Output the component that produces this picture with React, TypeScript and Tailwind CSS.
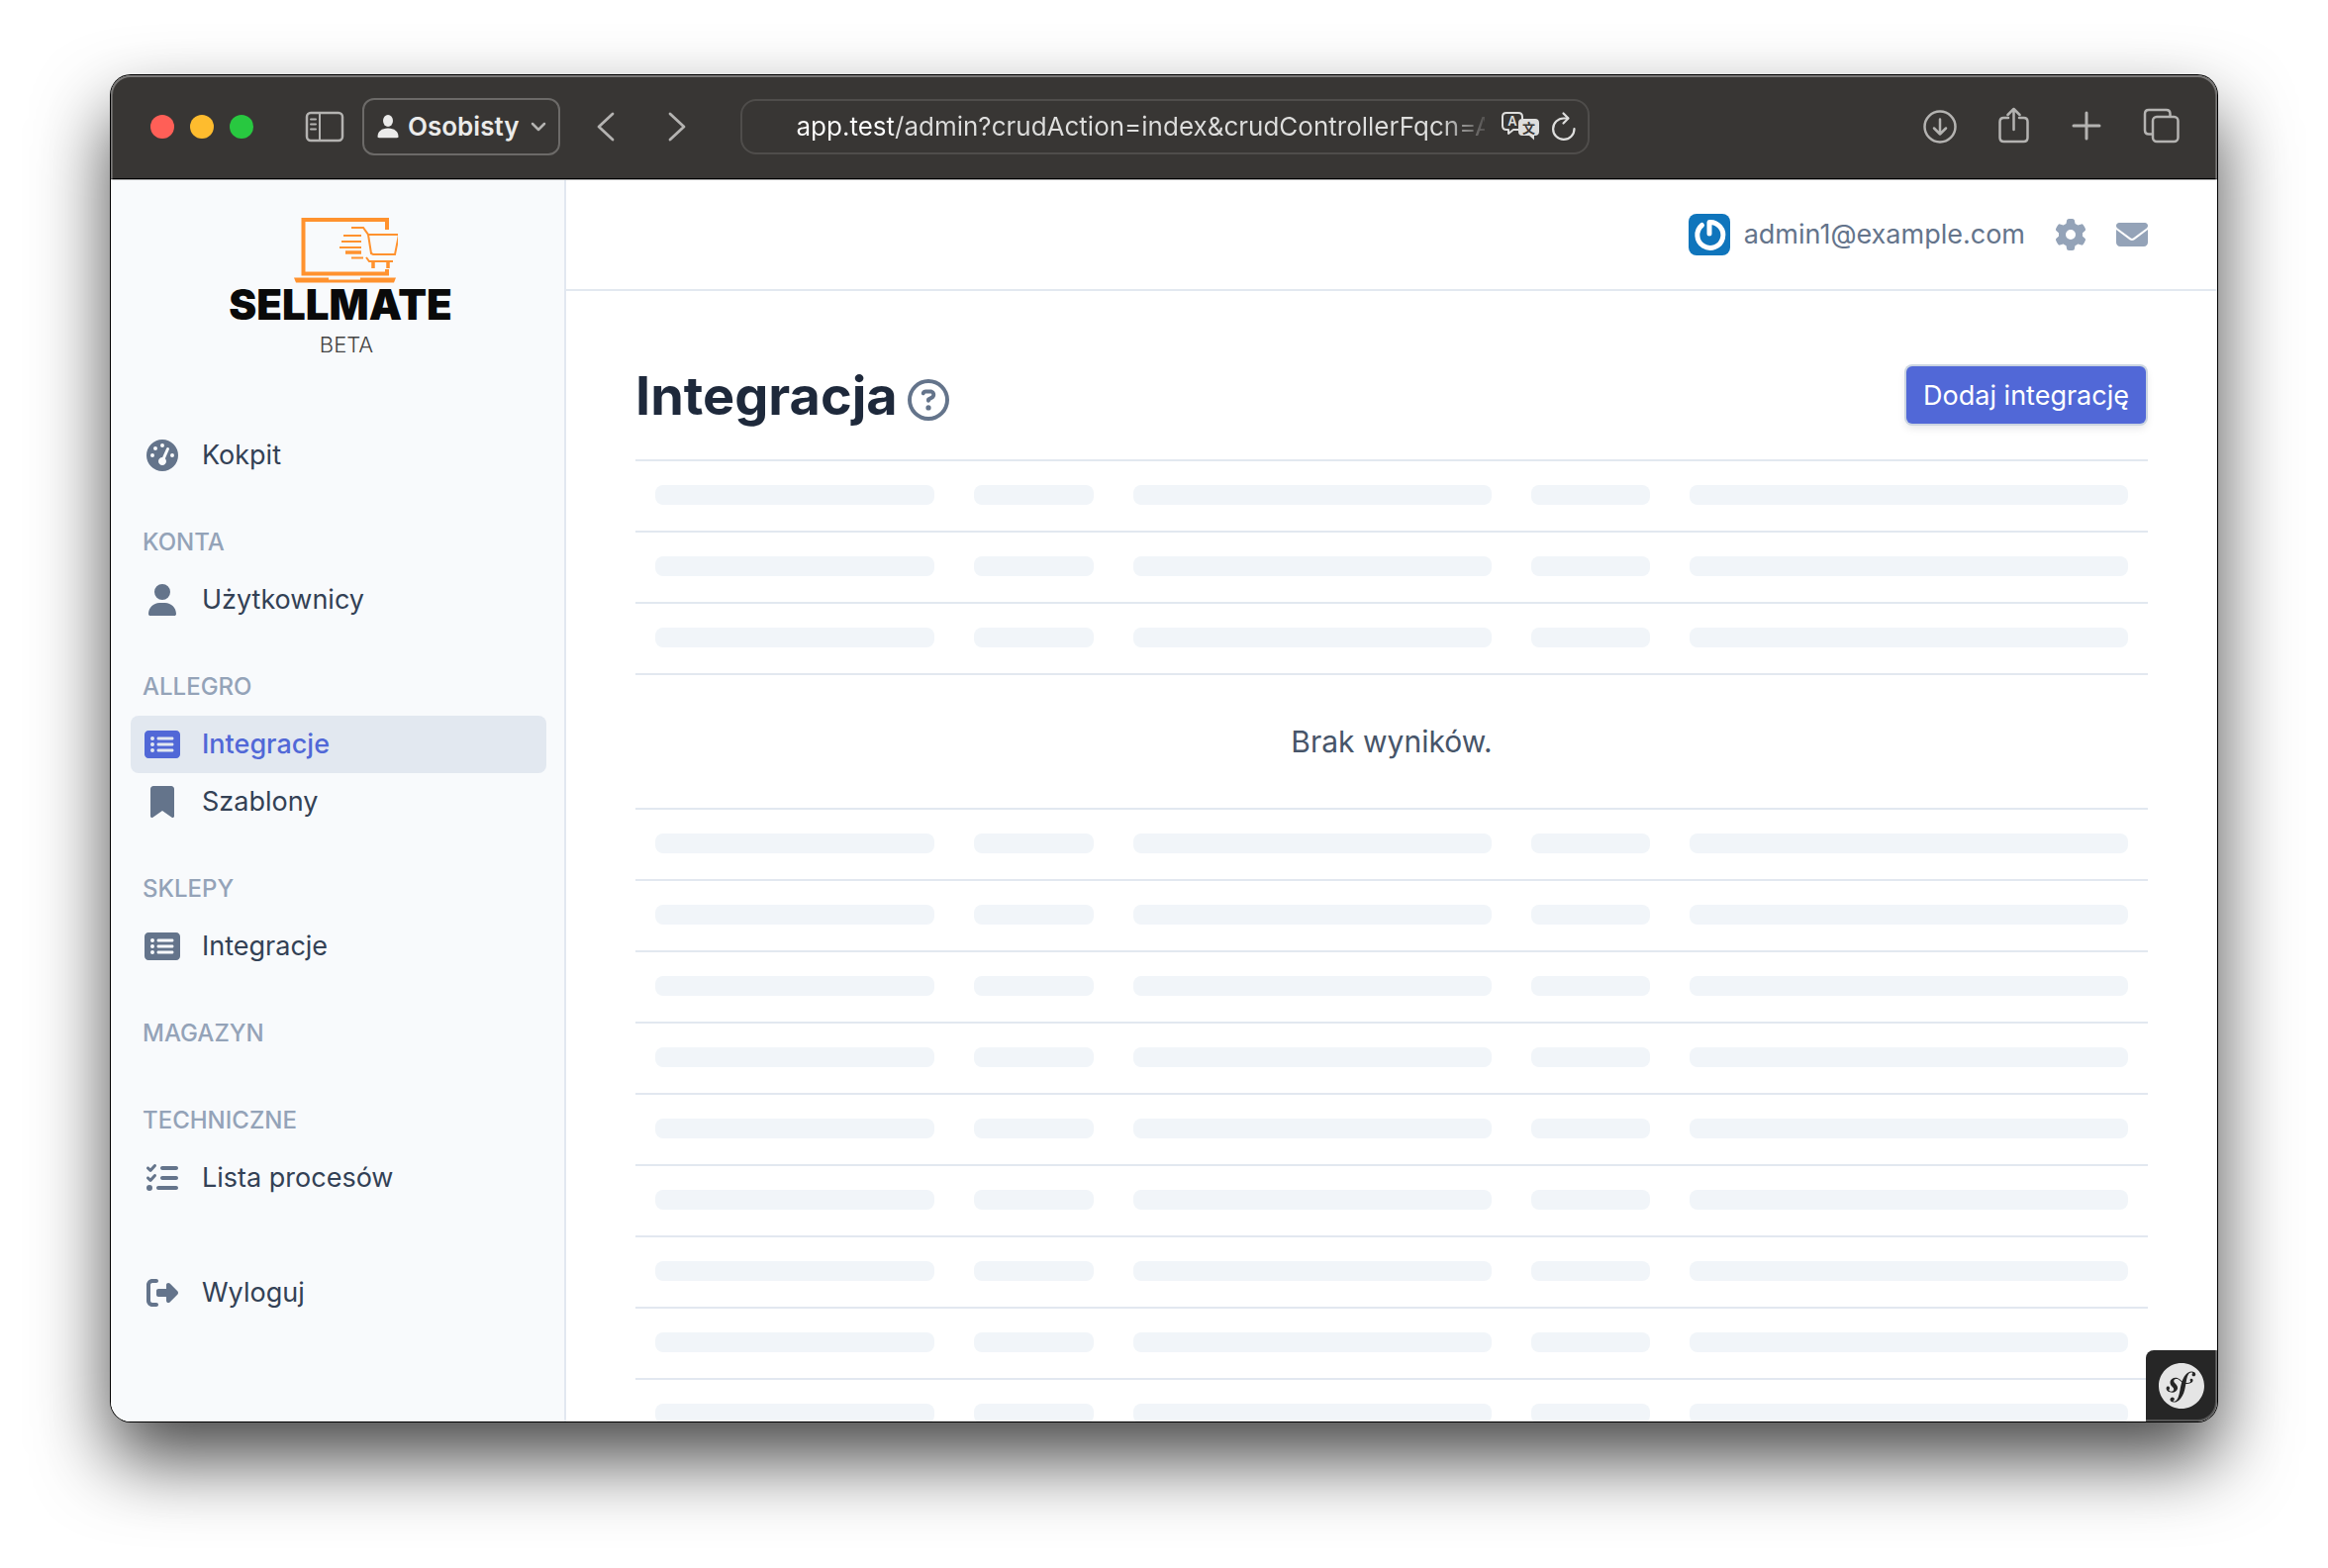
import type { ComponentType } from "react";
import {
  FaBookmark,
  FaEnvelope,
  FaGaugeHigh,
  FaGear,
  FaListCheck,
  FaRectangleList,
  FaRegCircleQuestion,
  FaRightFromBracket,
  FaUser,
} from "react-icons/fa6";
import { SiSymfony } from "react-icons/si";

type Icon = ComponentType<{ className?: string }>;

type MenuSection = {
  title?: string;
  items: { label: string; icon: Icon; active?: boolean }[];
};

const menu: MenuSection[] = [
  { items: [{ label: "Kokpit", icon: FaGaugeHigh }] },
  { title: "Konta", items: [{ label: "Użytkownicy", icon: FaUser }] },
  {
    title: "Allegro",
    items: [
      { label: "Integracje", icon: FaRectangleList, active: true },
      { label: "Szablony", icon: FaBookmark },
    ],
  },
  { title: "Sklepy", items: [{ label: "Integracje", icon: FaRectangleList }] },
  { title: "Magazyn", items: [] },
  { title: "Techniczne", items: [{ label: "Lista procesów", icon: FaListCheck }] },
];

function TitleBar() {
  return (
    <div className="flex h-[105px] shrink-0 items-center border-b border-black bg-[#383634] pr-9 pb-px pl-10 text-[#b4b3b1]">
      <div className="flex gap-4">
        <span className="h-6 w-6 rounded-full bg-[#ff5f57]" />
        <span className="h-6 w-6 rounded-full bg-[#febc2e]" />
        <span className="h-6 w-6 rounded-full bg-[#28c840]" />
      </div>

      <button type="button" aria-label="Pasek boczny" className="ml-[52px]">
        <svg className="h-8 w-10" viewBox="0 0 40 32" fill="none" stroke="currentColor" strokeWidth="2.5">
          <rect x="2" y="2" width="36" height="28" rx="4" />
          <path d="M15 2v28" strokeWidth="2" />
          <path d="M6 8.500h5M6 13.500h5M6 18.500h5" strokeWidth="2" strokeLinecap="round" />
        </svg>
      </button>

      <button
        type="button"
        className="ml-[18px] flex h-[58px] items-center rounded-xl border-2 border-[#6c6a68] px-3 text-[#ebebea]"
      >
        <svg className="h-6 w-6" viewBox="0 0 24 24" fill="currentColor">
          <ellipse cx="12" cy="6" rx="5" ry="6" />
          <path d="M1.500 22c0-5 4-8.500 10.500-8.500s10.500 3.500 10.500 8.500c0 .8-.5 1.200-1.500 1.200H3c-1 0-1.500-.4-1.500-1.200z" />
        </svg>
        <span className="ml-2 text-[26px] font-semibold">Osobisty</span>
        <svg className="ml-3 h-4 w-4 text-[#b4b3b1]" viewBox="0 0 16 16" fill="none" stroke="currentColor" strokeWidth="2.500" strokeLinecap="round" strokeLinejoin="round">
          <path d="M2 5l6 6 6-6" />
        </svg>
      </button>

      <button type="button" aria-label="Wstecz" className="ml-9">
        <svg className="h-8 w-5" viewBox="0 0 20 32" fill="none" stroke="currentColor" strokeWidth="2.800" strokeLinecap="round" strokeLinejoin="round">
          <path d="M17 3L3 16l14 13" />
        </svg>
      </button>
      <button type="button" aria-label="Dalej" className="ml-[52px]">
        <svg className="h-8 w-5" viewBox="0 0 20 32" fill="none" stroke="currentColor" strokeWidth="2.800" strokeLinecap="round" strokeLinejoin="round">
          <path d="M3 3l14 13L3 29" />
        </svg>
      </button>

      <div className="ml-[54px] flex h-14 min-w-0 flex-[0_1_858px] items-center rounded-2xl border-2 border-[#4f4d4b] pr-2.5 pl-[54px] text-[#dededd]">
        <input
          type="text"
          aria-label="Adres"
          readOnly
          value="app.test/admin?crudAction=index&crudControllerFqcn=App%5CController"
          className="min-w-0 flex-1 bg-[linear-gradient(90deg,#fff_98px,#dededd_98px)] [background-clip:text] text-[26px] text-transparent outline-none [mask-image:linear-gradient(90deg,#000_650px,transparent_705px)]"
        />
        <button type="button" aria-label="Przetłumacz" className="ml-4">
          <svg className="h-8 w-10" viewBox="0 0 40 32" fill="none">
            <path
              d="M18 19h-5l-5 4v-4H6c-2.500 0-4-1.500-4-4V6c0-2.500 1.500-4 4-4h12c2.500 0 4 1.500 4 4v2"
              stroke="currentColor"
              strokeWidth="2"
              strokeLinejoin="round"
            />
            <text x="12" y="15" fontSize="13" fontWeight="600" textAnchor="middle" fill="currentColor">
              A
            </text>
            <path d="M22 8h13c2.500 0 4 1.500 4 4v9c0 2.500-1.500 4-4 4h-1v4.500L29 25h-7c-2.500 0-4-1.500-4-4v-9c0-2.500 1.500-4 4-4z" fill="currentColor" />
            <text x="28.500" y="21.500" fontSize="13" fontWeight="700" textAnchor="middle" fill="#383634">
              文
            </text>
          </svg>
        </button>
        <button type="button" aria-label="Odśwież" className="ml-2.5">
          <svg className="h-8 w-7" viewBox="0 0 28 32" fill="none" stroke="currentColor" strokeWidth="2.200" strokeLinecap="round" strokeLinejoin="round">
            <path d="M24.500 18A10.700 10.700 0 1 1 14 7.500h4" />
            <path d="M13.500 2.500l5 5-5 5" />
          </svg>
        </button>
      </div>

      <div className="ml-auto flex items-center gap-9">
        <button type="button" aria-label="Pobrane">
          <svg className="h-10 w-10" viewBox="0 0 40 40" fill="none" stroke="currentColor" strokeWidth="2.500" strokeLinecap="round" strokeLinejoin="round">
            <circle cx="20" cy="20" r="15.500" />
            <path d="M20 12.500v15M14 21.500l6 6 6-6" />
          </svg>
        </button>
        <button type="button" aria-label="Udostępnij">
          <svg className="h-10 w-9" viewBox="0 0 36 40" fill="none" stroke="currentColor" strokeWidth="2.500" strokeLinecap="round" strokeLinejoin="round">
            <path d="M13 11H8.500c-2.500 0-4 1.500-4 4v16c0 2.500 1.500 4 4 4h20c2.500 0 4-1.500 4-4V15c0-2.500-1.500-4-4-4H24" />
            <path d="M18.500 23V2M12.500 8l6-6 6 6" />
          </svg>
        </button>
        <button type="button" aria-label="Nowa karta">
          <svg className="h-10 w-10" viewBox="0 0 40 40" fill="none" stroke="currentColor" strokeWidth="3" strokeLinecap="round">
            <path d="M20 6v26M7 19h26" />
          </svg>
        </button>
        <button type="button" aria-label="Karty">
          <svg className="h-10 w-10" viewBox="0 0 40 40" fill="none" stroke="currentColor" strokeWidth="2.500">
            <rect x="11" y="10" width="25.500" height="25" rx="4" />
            <path d="M11 27.500H7c-2.500 0-4-1.500-4-4V7c0-2.500 1.500-4 4-4h17.500c2.500 0 4 1.500 4 4v3" />
          </svg>
        </button>
      </div>
    </div>
  );
}

function Logo() {
  return (
    <a href="#" className="flex flex-col items-center pt-9 text-[#0a0a0a]">
      <svg className="ml-3.5 h-[70px] w-[106px]" viewBox="0 0 106 70" fill="none" stroke="#ff922e">
        <path d="M95 14V4H10.500V58.500H95V54" strokeWidth="4" />
        <path d="M1 62.500h35v2h32v-2h36l-2 5H3z" fill="#ff922e" stroke="none" />
        <path d="M59 12h12l5 7 3 19 2 1h22l4-20H75" strokeWidth="2" />
        <path d="M74 42l3 4h24" strokeWidth="2" />
        <path d="M51 20h18M49 26h20M47 32h22M59 42.500h12" strokeWidth="2" />
        <path d="M53 37h16M81 46v7M96 46v7" strokeWidth="3.500" />
      </svg>
      <span className="ml-1 text-[42px] leading-10 font-black">SELLMATE</span>
      <span className="ml-4 text-[22px] leading-10 font-light text-[#444]">BETA</span>
    </a>
  );
}

function MenuLink({ label, icon: IconComponent, active }: MenuSection["items"][number]) {
  return (
    <li>
      <a
        href="#"
        className={
          active
            ? "flex h-[58px] items-center gap-[22px] rounded-lg bg-[#e2e8f0] pl-3.5 font-medium text-[#5168d7]"
            : "flex h-[58px] items-center gap-[22px] rounded-lg pl-3.5 text-[#334155]"
        }
      >
        <IconComponent className={active ? "h-8 w-9" : "h-8 w-9 text-[#64748b]"} />
        {label}
      </a>
    </li>
  );
}

function Sidebar() {
  return (
    <aside className="w-[460px] shrink-0 border-r-2 border-[#e2e8f0] bg-[#f8fafc] pr-[18px] pl-5">
      <div className="h-[249px]">
        <Logo />
      </div>
      <nav className="text-[27px]">
        {menu.map((section) => (
          <div key={section.title ?? "main"}>
            {section.title && (
              <h2 className="flex h-[88px] items-end pb-[11px] pl-3 text-[24px] leading-9 font-medium text-[#94a3b8] uppercase">
                {section.title}
              </h2>
            )}
            <ul>
              {section.items.map((item) => (
                <MenuLink key={item.label} {...item} />
              ))}
            </ul>
          </div>
        ))}
        <ul className="mt-[58px]">
          <MenuLink label="Wyloguj" icon={FaRightFromBracket} />
        </ul>
      </nav>
    </aside>
  );
}

function PlaceholderRow() {
  return (
    <tr className="h-[72px] border-t-2 border-[#e2e8f0]">
      {[1, 2, 3, 4, 5].map((i) => (
        <td key={i} className="px-5">
          <div className="mb-0.5 h-5 rounded-lg bg-[#f1f5f9]" />
        </td>
      ))}
    </tr>
  );
}

function Content() {
  return (
    <main className="min-w-0 flex-1 bg-white">
      <header className="flex h-28 items-center justify-end border-b-2 border-[#e2e8f0] px-[70px] text-[#94a3b8]">
        <button type="button" className="flex items-center gap-3.5 text-[27px] text-[#64748b]">
          <svg className="h-[42px] w-[42px]" viewBox="0 0 42 42" fill="none">
            <rect width="42" height="42" rx="8" fill="#0f75bc" />
            <path
              d="M13.500 11.500A13 13 0 1 0 21 8.500V20"
              stroke="#fff"
              strokeWidth="5"
              strokeLinecap="round"
              strokeLinejoin="round"
            />
          </svg>
          admin1@example.com
        </button>
        <button type="button" aria-label="Ustawienia" className="ml-[30px]">
          <FaGear className="h-8 w-8" />
        </button>
        <button type="button" aria-label="Wiadomości" className="ml-[30px]">
          <FaEnvelope className="h-8 w-8" />
        </button>
      </header>

      <section className="px-[70px] pt-[70px]">
        <div className="flex h-[100px] items-start justify-between">
          <div className="flex items-center gap-2.5">
            <h1 className="text-[54px] leading-[72px] font-bold text-[#1e293b]">Integracja</h1>
            <FaRegCircleQuestion className="mt-2 h-[42px] w-[42px] text-[#64748b]" />
          </div>
          <button
            type="button"
            className="mt-1.5 mr-0.5 h-[58px] rounded-md bg-[#5168d7] px-[17px] pt-0.5 text-[27px] text-white shadow-[0_0_0_2px_#cbd5e1,0_4px_8px_rgba(15,23,42,0.12)]"
          >
            Dodaj integrację
          </button>
        </div>

        <table className="w-full table-fixed border-collapse">
          <colgroup>
            <col className="w-[20%]" />
            <col className="w-[10%]" />
            <col className="w-[25%]" />
            <col className="w-[10%]" />
            <col className="w-[30%]" />
          </colgroup>
          <tbody>
            {Array.from({ length: 3 }, (_, i) => (
              <PlaceholderRow key={i} />
            ))}
            <tr className="h-[136px] border-t-2 border-[#e2e8f0]">
              <td colSpan={5} className="text-center text-[30px] text-[#475569]">
                Brak wyników.
              </td>
            </tr>
            {Array.from({ length: 14 }, (_, i) => (
              <PlaceholderRow key={i} />
            ))}
          </tbody>
        </table>
      </section>
    </main>
  );
}

export default function App() {
  return (
    <div className="flex h-screen flex-col bg-white px-28 pt-[76px] pb-[148px] font-['Inter','Noto_Sans_CJK_SC',sans-serif]">
      <div className="relative flex min-h-0 flex-1 flex-col overflow-hidden rounded-[20px] shadow-[0_0_0_1px_#000,0_38px_76px_rgba(0,0,0,0.72)]">
        <TitleBar />
        <div className="flex min-h-0 flex-1 overflow-hidden border-t border-[#a3a3a3]">
          <Sidebar />
          <Content />
        </div>

        <button
          type="button"
          aria-label="Symfony"
          className="absolute right-0 bottom-0 flex h-[72px] w-[72px] items-center justify-center rounded-tl-lg bg-[#262626] text-[#e5e5e5]"
        >
          <SiSymfony className="h-[46px] w-[46px]" />
        </button>
        <div className="pointer-events-none absolute inset-0 rounded-[20px] shadow-[inset_0_0_0_2px_rgba(255,255,255,0.22),inset_0_1px_0_1px_rgba(255,255,255,0.15)]" />
      </div>
    </div>
  );
}
